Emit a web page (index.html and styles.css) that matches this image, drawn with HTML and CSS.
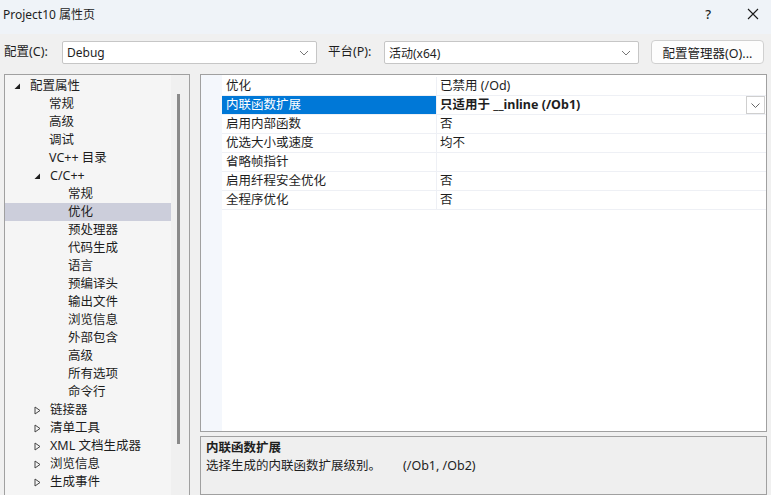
FILE: index.html
```html
<!DOCTYPE html>
<html lang="zh-CN">
<head>
<meta charset="utf-8">
<title>Project10 属性页</title>
<link rel="stylesheet" href="styles.css">
</head>
<body>
<div class="window">
  <div class="titlebar">
    <span class="title">Project10 属性页</span>
    <span class="tb-btns">
      <span class="help">?</span>
      <svg class="close" width="12" height="12" viewBox="0 0 12 12"><path d="M1 1L11 11M11 1L1 11" stroke="#1a1a1a" stroke-width="1.1" fill="none"/></svg>
    </span>
  </div>
  <div class="toolbar">
    <span class="lbl">配置(C):</span>
    <div class="combo c1"><span>Debug</span><svg width="10" height="6" viewBox="0 0 10 6"><path d="M1 1L5 5L9 1" stroke="#777" fill="none"/></svg></div>
    <span class="lbl lbl2">平台(P):</span>
    <div class="combo c2"><span>活动(x64)</span><svg width="10" height="6" viewBox="0 0 10 6"><path d="M1 1L5 5L9 1" stroke="#777" fill="none"/></svg></div>
    <button class="btn">配置管理器(O)...</button>
  </div>
  <div class="main">
    <div class="tree">
      <div class="tree-items">
        <div class="ti l0"><svg class="tri" width="7" height="7" viewBox="0 0 7 7"><path d="M6 0.5V6H0.5Z" fill="#1e1e1e"/></svg>配置属性</div>
        <div class="ti l1">常规</div>
        <div class="ti l1">高级</div>
        <div class="ti l1">调试</div>
        <div class="ti l1">VC++ 目录</div>
        <div class="ti l1e"><svg class="tri" width="7" height="7" viewBox="0 0 7 7"><path d="M6 0.5V6H0.5Z" fill="#1e1e1e"/></svg>C/C++</div>
        <div class="ti l2">常规</div>
        <div class="ti l2 sel">优化</div>
        <div class="ti l2">预处理器</div>
        <div class="ti l2">代码生成</div>
        <div class="ti l2">语言</div>
        <div class="ti l2">预编译头</div>
        <div class="ti l2">输出文件</div>
        <div class="ti l2">浏览信息</div>
        <div class="ti l2">外部包含</div>
        <div class="ti l2">高级</div>
        <div class="ti l2">所有选项</div>
        <div class="ti l2">命令行</div>
        <div class="ti l1e"><svg class="tri" width="7" height="9" viewBox="0 0 7 9"><path d="M1 1L6 4.5L1 8Z" fill="none" stroke="#444"/></svg>链接器</div>
        <div class="ti l1e"><svg class="tri" width="7" height="9" viewBox="0 0 7 9"><path d="M1 1L6 4.5L1 8Z" fill="none" stroke="#444"/></svg>清单工具</div>
        <div class="ti l1e"><svg class="tri" width="7" height="9" viewBox="0 0 7 9"><path d="M1 1L6 4.5L1 8Z" fill="none" stroke="#444"/></svg>XML 文档生成器</div>
        <div class="ti l1e"><svg class="tri" width="7" height="9" viewBox="0 0 7 9"><path d="M1 1L6 4.5L1 8Z" fill="none" stroke="#444"/></svg>浏览信息</div>
        <div class="ti l1e"><svg class="tri" width="7" height="9" viewBox="0 0 7 9"><path d="M1 1L6 4.5L1 8Z" fill="none" stroke="#444"/></svg>生成事件</div>
      </div>
      <div class="vscroll"><div class="thumb"></div></div>
    </div>
    <div class="right">
      <div class="grid">
        <div class="gutter"></div>
        <div class="rows">
          <div class="row"><div class="name">优化</div><div class="val">已禁用 (/Od)</div></div>
          <div class="row rsel"><div class="name">内联函数扩展</div><div class="val bold">只适用于 __inline (/Ob1)<span class="ddbtn"><svg width="9" height="5" viewBox="0 0 9 5"><path d="M0.5 0.5L4.5 4.5L8.5 0.5" stroke="#666" fill="none"/></svg></span></div></div>
          <div class="row"><div class="name">启用内部函数</div><div class="val">否</div></div>
          <div class="row"><div class="name">优选大小或速度</div><div class="val">均不</div></div>
          <div class="row"><div class="name">省略帧指针</div><div class="val"></div></div>
          <div class="row"><div class="name">启用纤程安全优化</div><div class="val">否</div></div>
          <div class="row"><div class="name">全程序优化</div><div class="val">否</div></div>
        </div>
      </div>
      <div class="desc">
        <div class="desc-title">内联函数扩展</div>
        <div class="desc-text"><span>选择生成的内联函数扩展级别。</span><span class="flags">(/Ob1, /Ob2)</span></div>
      </div>
    </div>
  </div>
</div>
</body>
</html>
```
FILE: styles.css
```css
* { box-sizing: border-box; }
html, body { margin: 0; padding: 0; }
body {
  width: 771px;
  height: 495px;
  overflow: hidden;
  background: #f0f0f0;
  font-family: "Noto Sans", "Noto Sans CJK SC", sans-serif;
  font-size: 12px;
  color: #1e1e1e;
}
.window { width: 771px; height: 495px; display: flex; flex-direction: column; }
.titlebar {
  height: 34px;
  background: #eff3f8;
  display: flex;
  align-items: center;
  justify-content: space-between;
  padding: 0 12px 0 3px;
  flex: none;
}
.title { font-size: 12px; line-height: 16px; margin-top: -5px; }
.tb-btns { display: flex; align-items: center; margin-top: -6px; }
.help { font-size: 13px; font-weight: 500; margin-right: 36px; }
.close { display: block; }

.toolbar {
  height: 40px;
  display: flex;
  align-items: flex-start;
  padding: 6px 0 0 4px;
  flex: none;
}
.lbl { line-height: 22px; font-size: 12.5px; margin-top: 1px; width: 58px; }
.lbl2 { width: 56px; }
.combo {
  height: 23px;
  margin-top: 1px;
  background: #fff;
  border: 1px solid #c6c6c6;
  border-radius: 2px;
  display: flex;
  align-items: center;
  justify-content: space-between;
  padding: 0 7px 0 4px;
  font-size: 12px;
}
.combo svg { display: block; }
.c1 { width: 255px; margin-right: 11px; }
.c2 { width: 255px; margin-right: 12px; }
.btn {
  height: 24px;
  width: 113px;
  background: #fdfdfd;
  border: 1px solid #d0d0d0;
  border-radius: 4px;
  font-family: inherit;
  font-size: 12.5px;
  color: #1e1e1e;
  padding: 0;
}

.main { display: flex; flex: 1; min-height: 0; padding-left: 4px; }
.tree {
  width: 186px;
  height: 421px;
  border: 1px solid #a0a0a0;
  border-bottom: none;
  background: #f5f5f5;
  display: flex;
  overflow: hidden;
  margin-right: 10px;
}
.tree-items { width: 166px; padding-top: 2px; }
.ti {
  height: 18px;
  line-height: 18px;
  white-space: nowrap;
  display: flex;
  align-items: center;
  font-size: 12.5px;
}
.ti .tri { flex: none; display: block; }
.l0 { padding-left: 9px; }
.l0 .tri { margin-right: 9px; }
.l1 { padding-left: 44px; }
.l1e { padding-left: 29px; }
.l1e .tri { margin-right: 9px; }
.l2 { padding-left: 63px; }
.sel { background: #cccedb; }
.vscroll { width: 18px; position: relative; background: #f0f0f0; }
.thumb {
  position: absolute;
  left: 6px;
  top: 19px;
  width: 3px;
  height: 350px;
  background: #8a8a8a;
}

.right { width: 567px; display: flex; flex-direction: column; }
.grid {
  height: 358px;
  border: 1px solid #a0a0a0;
  background: #fff;
  display: flex;
}
.gutter { width: 21px; background: #f4f7fc; flex: none; }
.rows { flex: 1; padding-top: 2px; }
.row {
  display: flex;
  height: 19px;
  border-bottom: 1px solid #eef0f5;
  font-size: 12.5px;
}
.name {
  width: 215px;
  padding-left: 4px;
  line-height: 18px;
  border-right: 1px solid #eef0f5;
  white-space: nowrap;
}
.val {
  flex: 1;
  padding-left: 3px;
  line-height: 18px;
  white-space: nowrap;
  display: flex;
  align-items: center;
}
.rsel .name { background: #0078d7; color: #fff; }
.bold { font-weight: 700; }
.ddbtn {
  margin-left: auto;
  margin-right: 1px;
  width: 19px;
  height: 18px;
  border: 1px solid #cfcfcf;
  background: #fff;
  display: flex;
  align-items: center;
  justify-content: center;
}
.ddbtn svg { display: block; }

.desc {
  margin-top: 4px;
  height: 59px;
  border: 1px solid #a0a0a0;
  background: #efefef;
  padding: 2px 5px;
  font-size: 12.5px;
}
.desc-title { font-weight: 700; line-height: 18px; }
.desc-text { line-height: 18px; display: flex; }
.flags { margin-left: 22px; }
```
